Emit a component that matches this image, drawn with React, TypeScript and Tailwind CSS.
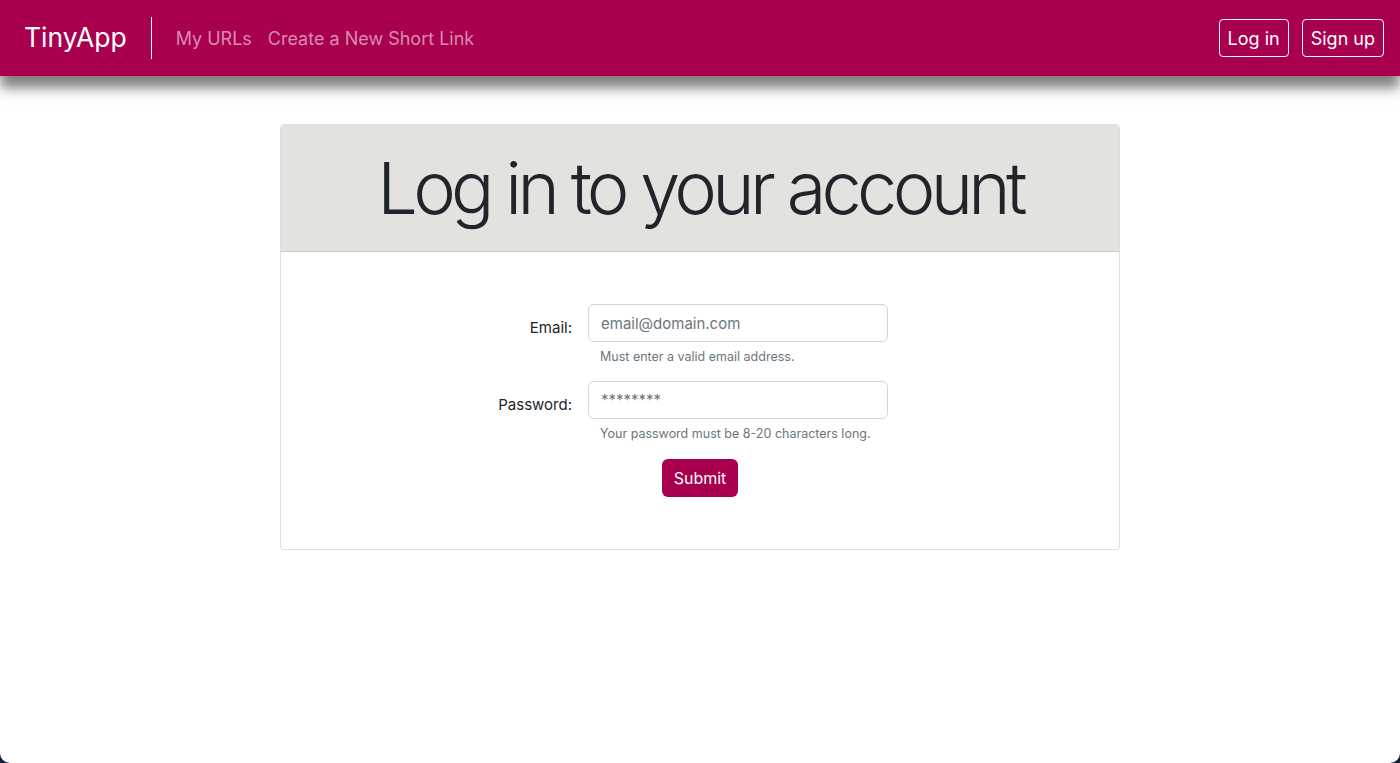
import { useState } from "react";

const font = { fontFamily: "Inter, 'Noto Sans', sans-serif" };

function Navbar() {
  return (
    <nav className="relative z-10 flex h-[76px] items-center justify-between bg-[#a8004e] px-4 shadow-[0_12px_12px_rgba(0,0,0,0.5)]">
      <div className="flex items-center">
        <a href="#" className="ml-2 text-[26.5px] text-white">
          TinyApp
        </a>
        <div className="mx-6 h-[42px] w-px bg-white" />
        <a href="#" className="text-[18px] text-[#d88caf]">
          My URLs
        </a>
        <a href="#" className="ml-4 text-[18px] text-[#d88caf]">
          Create a New Short Link
        </a>
      </div>
      <div className="flex items-center gap-[13px]">
        <button className="h-[38px] rounded border border-white px-2 text-[18px] text-white">
          Log in
        </button>
        <button className="h-[38px] rounded border border-white px-2 text-[18px] text-white">
          Sign up
        </button>
      </div>
    </nav>
  );
}

function LoginCard() {
  const [email, setEmail] = useState("");
  const [password, setPassword] = useState("");

  return (
    <div className="mx-auto mt-12 w-[840px] rounded border border-[#dedede]">
      <div className="flex h-[127px] items-center justify-center border-b border-[#cfcfcf] bg-[#e3e2df]">
        <h1 className="text-[72px] font-light tracking-[-4.7px] text-[#212529]">Log in to your account</h1>
      </div>
      <form
        className="flex flex-col pt-[52px] pb-[52px] pl-[170px]"
        onSubmit={(e) => e.preventDefault()}
      >
        <div className="flex items-start">
          <label className="w-[121px] pt-[13px] text-right text-[15px] text-[#212529]">Email:</label>
          <div className="ml-[16px]">
            <input
              type="email"
              value={email}
              onChange={(e) => setEmail(e.target.value)}
              placeholder="email@domain.com"
              className="h-[38px] w-[300px] rounded-md border border-[#ced4da] px-3 text-[15px] outline-none placeholder:text-[#6c757d]"
            />
            <p className="mt-[6px] pl-3 text-[12.5px] text-[#6c757d]">Must enter a valid email address.</p>
          </div>
        </div>
        <div className="mt-[14px] flex items-start">
          <label className="w-[121px] pt-[13px] text-right text-[15px] text-[#212529]">Password:</label>
          <div className="ml-[16px]">
            <input
              type="password"
              value={password}
              onChange={(e) => setPassword(e.target.value)}
              placeholder="********"
              className="h-[38px] w-[300px] rounded-md border border-[#ced4da] px-3 text-[15px] outline-none placeholder:text-[#6c757d]"
            />
            <p className="mt-[6px] pl-3 text-[12.5px] text-[#6c757d]">
              Your password must be 8-20 characters long.
            </p>
          </div>
        </div>
        <div className="mt-[15px] flex justify-center pr-[170px]">
          <button
            type="submit"
            className="h-[38px] rounded-md bg-[#a8004e] px-3 text-[16px] text-white"
          >
            Submit
          </button>
        </div>
      </form>
    </div>
  );
}

export default function App() {
  return (
    <div className="h-screen bg-[#13233a]" style={font}>
      <div className="h-full overflow-hidden rounded-b-[10px] bg-white">
        <Navbar />
        <LoginCard />
      </div>
    </div>
  );
}
